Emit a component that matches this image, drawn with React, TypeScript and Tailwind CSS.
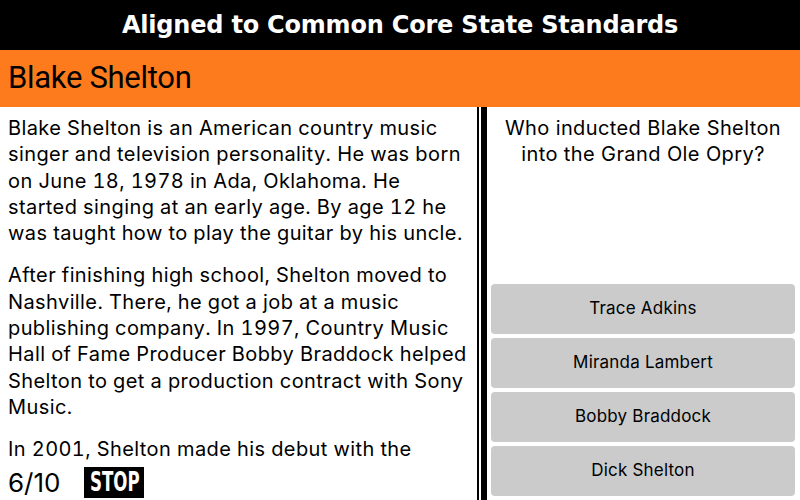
import React from "react";

const passage = [
  "Blake Shelton is an American country music singer and television personality. He was born on June 18, 1978 in Ada, Oklahoma. He started singing at an early age. By age 12 he was taught how to play the guitar by his uncle.",
  "After finishing high school, Shelton moved to Nashville. There, he got a job at a music publishing company. In 1997, Country Music Hall of Fame Producer Bobby Braddock helped Shelton to get a production contract with Sony Music.",
  "In 2001, Shelton made his debut with the single \"Austin\", which spent five weeks at the top of the Billboard country charts.",
];

const answers = ["Trace Adkins", "Miranda Lambert", "Bobby Braddock", "Dick Shelton"];

export default function App() {
  return (
    <div className="w-[800px] h-[500px] flex flex-col overflow-hidden bg-white text-black font-['Inter',sans-serif]">
      <header className="h-[50px] shrink-0 bg-black text-white flex items-center justify-center text-[24px] font-bold font-['DejaVu_Sans',sans-serif] tracking-[-0.2px]">
        Aligned to Common Core State Standards
      </header>

      <div className="h-[57px] shrink-0 bg-[#fd7b1c] flex items-center px-2 text-[31px] font-['Roboto',sans-serif] tracking-[-0.3px]">
        Blake Shelton
      </div>

      <div className="flex-1 flex min-h-0">
        <div className="w-[477px] shrink-0 flex flex-col pl-2 pr-2">
          <div className="flex-1 min-h-0 overflow-hidden pt-[8px] text-[20px] leading-[26.3px] tracking-[0.4px] tabular-nums">
            {passage.map((p) => (
              <p key={p.slice(0, 12)} className="mb-[16px]">
                {p}
              </p>
            ))}
          </div>
          <div className="h-[36px] shrink-0 flex items-center gap-[24px]">
            <span className="text-[26px]">6/10</span>
            <span className="bg-black text-white h-[31px] w-[60px] flex items-center justify-center">
              <span className="inline-block text-[26px] leading-[26px] font-bold font-['DejaVu_Sans',sans-serif] scale-x-[0.64]">STOP</span>
            </span>
          </div>
        </div>

        <div className="flex shrink-0">
          <div className="w-[2px] bg-black" />
          <div className="w-[2px]" />
          <div className="w-[6px] bg-black" />
        </div>

        <div className="flex-1 flex flex-col pl-1 pr-[5px] pb-1">
          <p className="pt-[8px] text-center text-[20px] leading-[26.3px] tracking-[0.4px]">
            Who inducted Blake Shelton
            <br />
            into the Grand Ole Opry?
          </p>
          <div className="flex-1" />
          <div className="flex flex-col gap-1">
            {answers.map((a) => (
              <button
                key={a}
                className="h-[50px] rounded-[4px] bg-[#cbcbcb] text-[17px] tracking-[0.2px] text-black flex items-center justify-center"
              >
                {a}
              </button>
            ))}
          </div>
        </div>
      </div>
    </div>
  );
}
